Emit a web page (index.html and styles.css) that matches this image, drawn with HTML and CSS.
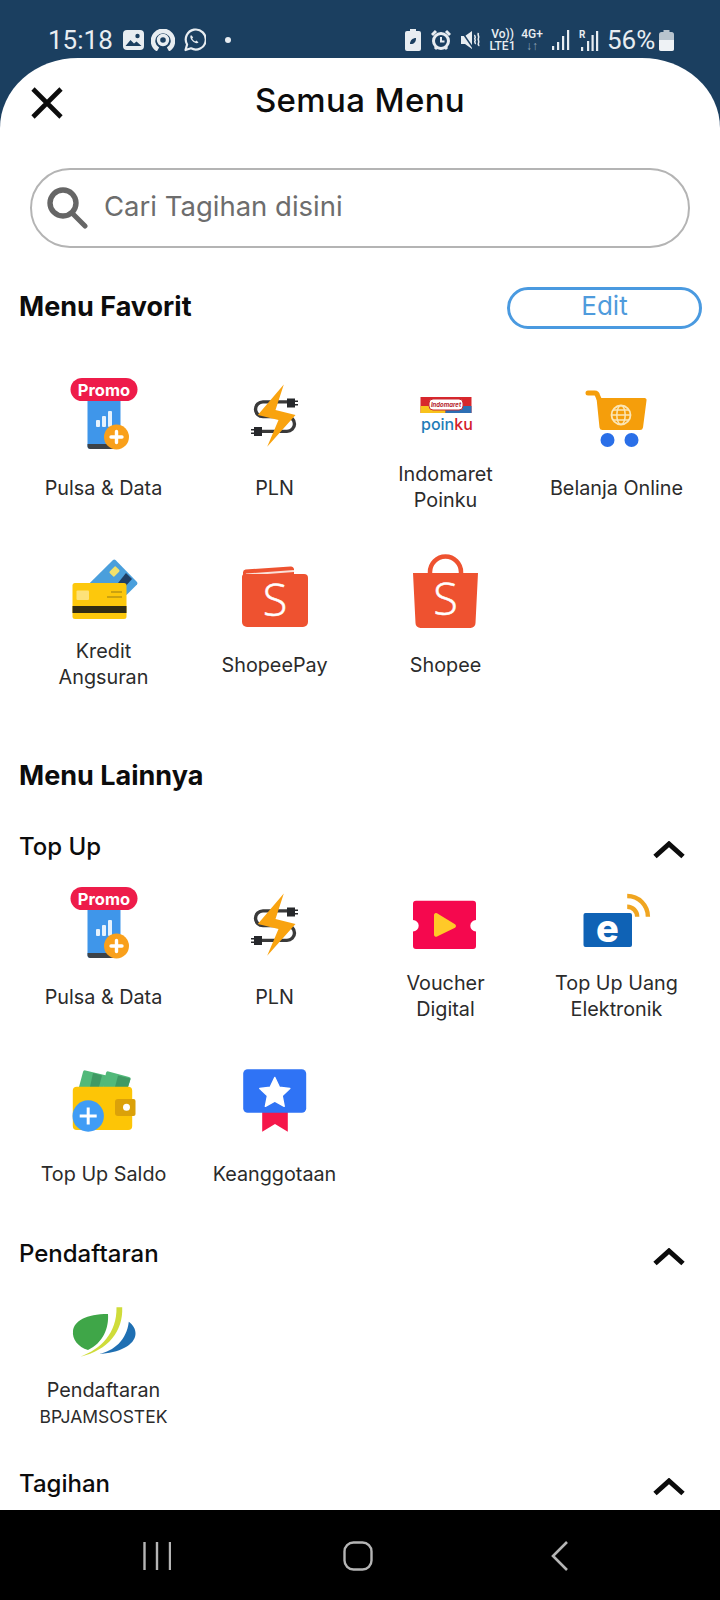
FILE: index.html
```html
<!DOCTYPE html>
<html>

<head>
    <title>Semua Menu</title>
    <link rel="stylesheet" href="styles.css">
</head>

<body>
    <div class="status-bar">
        <div class="status-side">
            <span class="clock">15:18</span>
            <svg class="st-icon" width="21" height="20" viewBox="0 0 21 20"><rect width="21" height="20" rx="4" fill="#e8edf1"/><circle cx="14.500" cy="6" r="2.200" fill="#1b3f60"/><path d="M2.500 16l5-6 3.500 3.500 2.500-2 5 4.500z" fill="#1b3f60"/></svg>
            <svg class="st-icon st-ring" width="24" height="22" viewBox="0 0 24 22"><path d="M7 20.500a10 10 0 1 1 10 0" fill="none" stroke="#e8edf1" stroke-width="4.600"/><circle cx="12" cy="11" r="4.500" fill="none" stroke="#e8edf1" stroke-width="3.400"/></svg>
            <svg class="st-icon" width="23" height="24" viewBox="0 0 23 24"><path d="M2.500 22l1.600-5.500A10 10 0 1 1 8 20.300z" fill="none" stroke="#e8edf1" stroke-width="2.200" stroke-linejoin="round"/><path d="M8 7c-1.500 1.500-.5 4 1.500 6s4.500 3 6 1.500l-2-2-1.300 1c-1.200-.5-2.500-1.800-3-3l1-1.300z" fill="#e8edf1"/></svg>
            <span class="st-dot"></span>
        </div>
        <div class="status-side">
            <svg class="st-icon st-saver" width="16" height="22" viewBox="0 0 16 22"><rect x="5" width="6" height="3" fill="#e8edf1"/><rect y="2" width="16" height="20" rx="2" fill="#e8edf1"/><path d="M5 15c0-4 3-6 6-6 0 4-2 6-5 6" fill="#1b3f60"/></svg>
            <svg class="st-icon st-alarm" width="20" height="22" viewBox="0 0 20 22"><circle cx="10" cy="12" r="7.500" fill="none" stroke="#e8edf1" stroke-width="3"/><path d="M10 8v4.500h3.500" fill="none" stroke="#e8edf1" stroke-width="2"/><path d="M1 6l4-4M19 6l-4-4M4 20l2-2M16 20l-2-2" stroke="#e8edf1" stroke-width="3"/></svg>
            <svg class="st-icon st-mute" width="19" height="20" viewBox="0 0 19 20"><path d="M0 6h4l7-5v18l-7-5H0z" fill="#e8edf1"/><path d="M1 2l11 16" stroke="#1b3f60" stroke-width="1.500"/><path d="M14 5c-1 1 1 2 0 3s1 2 0 3 1 2 0 3M17.500 3c-1.500 2 1 3 0 5s1 3 0 5 1 2 0 3" fill="none" stroke="#e8edf1" stroke-width="1.600"/></svg>
            <span class="st-stack st-volte">Vo))<br>LTE1</span>
            <span class="st-stack st-net">4G+<br><i>↓↑</i></span>
            <svg class="st-icon" width="19" height="20" viewBox="0 0 19 20"><path d="M1 16h2.200v4H1zM6 12h2.200v8H6zM11 6h2.200v14H11zM16 0h2.200v20H16z" fill="#e8edf1"/></svg>
            <svg class="st-icon st-roam" width="20" height="22" viewBox="0 0 20 22"><path d="M2 18h2.200v4H2zM8 12h2.200v10H8zM12.500 6h2.200v16h-2.200zM17 2h2.200v20H17z" fill="#e8edf1"/><text x="0" y="9" class="st-r">R</text></svg>
            <span class="battery-text">56%</span>
            <svg class="st-icon" width="15" height="21" viewBox="0 0 15 21"><rect x="4.500" width="6" height="3" fill="#b8c4ce"/><rect y="2" width="15" height="19" rx="2.500" fill="#b8c4ce"/><path d="M0 10h15v8.500a2.500 2.500 0 0 1-2.500 2.500h-10A2.500 2.500 0 0 1 0 18.500z" fill="#eef2f5"/></svg>
        </div>
    </div>

    <div class="sheet">
        <div class="sheet-header">
            <svg class="close-icon" width="32" height="32" viewBox="0 0 32 32"><path d="M2 2l28 28M30 2L2 30" stroke="#0c0c0c" stroke-width="4.600"/></svg>
            <h1>Semua Menu</h1>
        </div>

        <div class="search-box">
            <svg class="search-icon" width="42" height="42" viewBox="0 0 42 42"><circle cx="17" cy="16" r="13" fill="none" stroke="#666" stroke-width="5.400"/><path d="M26 26l13 13" stroke="#666" stroke-width="5" stroke-linecap="round"/></svg>
            <span>Cari Tagihan disini</span>
        </div>

        <div class="fav-head">
            <h2>Menu Favorit</h2>
            <div class="edit-btn">Edit</div>
        </div>

        <div class="menu-grid fav-grid">
            <div class="menu-item">
                <svg class="icon" viewBox="0 0 80 80">
                    <rect x="23.500" y="20" width="33" height="56" rx="3" fill="#3f96ea"/>
                    <path d="M23.500 71h33v2a3 3 0 0 1-3 3h-27a3 3 0 0 1-3-3z" fill="#3c4248"/>
                    <rect x="32" y="47" width="4" height="7" rx="1" fill="#e6f2fd"/>
                    <rect x="38" y="43" width="4" height="11" rx="1" fill="#e6f2fd"/>
                    <rect x="44" y="38" width="4" height="16" rx="1" fill="#e6f2fd"/>
                    <circle cx="52.500" cy="64" r="12.500" fill="#f9a01b"/>
                    <path d="M47 64h11M52.500 58.500v11" stroke="#fff" stroke-width="3.400" stroke-linecap="round"/>
                    <rect x="6.500" y="5" width="67" height="23" rx="11.500" fill="#ee1c4a"/>
                    <text x="40" y="22.500" class="promo-text">Promo</text>
                </svg>
                <div class="label">Pulsa &amp; Data</div>
            </div>
            <div class="menu-item">
                <svg class="icon" viewBox="0 0 80 80">
                    <path d="M60 30H28a7.500 7.500 0 0 0 0 15h24a7.500 7.500 0 0 1 0 15H20" fill="none" stroke="#3a3a3a" stroke-width="3.400" transform="translate(0 -.5) scale(1 .98)"/>
                    <path d="M52 25.500h8v2h3v1.500h-3v2h3v1.500h-3v2h-8zM27 54h-8v2h-3v1.500h3v2h-3v1.500h3v2h8z" fill="#26282b"/>
                    <path d="M48.800 11.500 22.800 42l20.700 5-11.300 26.700L60.500 42l-20-5z" fill="#f9a30f"/>
                </svg>
                <div class="label">PLN</div>
            </div>
            <div class="menu-item">
                <svg class="icon" viewBox="0 0 80 80">
                    <rect x="14.500" y="24" width="51" height="16" fill="#d8262c"/>
                    <rect x="14.500" y="33" width="25" height="7" fill="#f8c21c"/>
                    <rect x="39.500" y="33" width="26" height="7" fill="#2d6fb4"/>
                    <rect x="23" y="26" width="34" height="11" rx="4" fill="#fff" stroke="#c92a32"/>
                    <text x="40" y="34" class="indo-text">Indomaret</text>
                    <text x="15" y="57" class="poin-text">poin<tspan fill="#d4202a">ku</tspan></text>
                </svg>
                <div class="label">Indomaret<br>Poinku</div>
            </div>
            <div class="menu-item">
                <svg class="icon" viewBox="0 0 80 80">
                    <path d="M11 20h6.500a3 3 0 0 1 3 2.500L23 28" fill="none" stroke="#f59e0b" stroke-width="5" stroke-linecap="round"/>
                    <path d="M19.500 25h48a2 2 0 0 1 2 2.500l-3.500 27a3 3 0 0 1-3 2.500H25.500a3 3 0 0 1-3-2.500z" fill="#f59e0b"/>
                    <circle cx="44" cy="42" r="9.500" fill="none" stroke="#fbe6b6" stroke-width="1.800"/>
                    <ellipse cx="44" cy="42" rx="4.200" ry="9.500" fill="none" stroke="#fbe6b6" stroke-width="1.500"/>
                    <path d="M34.500 42h19M36 37h16M36 47h16" stroke="#fbe6b6" stroke-width="1.500"/>
                    <circle cx="30.500" cy="67" r="7" fill="#2a6fe8"/>
                    <circle cx="54.500" cy="67" r="7" fill="#2a6fe8"/>
                </svg>
                <div class="label">Belanja Online</div>
            </div>
            <div class="menu-item">
                <svg class="icon" viewBox="0 0 80 80">
                    <path d="M49 10a2 2 0 0 1 2.500 0l21.500 22a2 2 0 0 1 0 2.500L62.500 45 24.800 34z" fill="#4a9fdc"/>
                    <path d="M62 23l6 6-8 9-6-5z" fill="#1f3f66"/>
                    <rect x="46" y="18" width="9" height="7" rx="1.500" transform="rotate(-45 50.500 21.500)" fill="#f2e16b"/>
                    <rect x="8.500" y="33" width="54" height="36" rx="2.500" fill="#fdc80c"/>
                    <rect x="8.500" y="56" width="54" height="7" fill="#322c12"/>
                    <rect x="12.500" y="40.500" width="12.500" height="9.500" rx="1" fill="#fde27a"/>
                    <path d="M43 47h15M47 42h11" stroke="#9a7c12" stroke-width="1.200"/>
                </svg>
                <div class="label">Kredit<br>Angsuran</div>
            </div>
            <div class="menu-item">
                <svg class="icon" viewBox="0 0 80 80">
                    <path d="M8 26.500v-4a3 3 0 0 1 2.500-3l45-3a3 3 0 0 1 3.500 3V25z" fill="#ee5230"/>
                    <path d="M11 24.500l48-3.500" stroke="#fbe1d8" stroke-width="2"/>
                    <path d="M7 27a3 3 0 0 1 3-3h59a4 4 0 0 1 4 4v44a5 5 0 0 1-5 5H12a5 5 0 0 1-5-5z" fill="#ee5230"/>
                    <text x="40" y="66" class="logo-s">S</text>
                </svg>
                <div class="label">ShopeePay</div>
            </div>
            <div class="menu-item">
                <svg class="icon" viewBox="0 0 80 80">
                    <path d="M24 25v-3a15.500 15.500 0 0 1 31 0v3" fill="none" stroke="#ee5230" stroke-width="4.500"/>
                    <path d="M7 23h65l-2.500 50a5 5 0 0 1-5 5h-50a5 5 0 0 1-5-5z" fill="#ee5230"/>
                    <text x="39.500" y="65" class="logo-s">S</text>
                </svg>
                <div class="label">Shopee</div>
            </div>
        </div>

        <h2 class="other-title">Menu Lainnya</h2>

        <div class="group-head">
            <h3>Top Up</h3>
            <svg class="chevron" width="32" height="18" viewBox="0 0 32 18"><path d="M2 15.500L16 3l14 12.500" fill="none" stroke="#0c0c0c" stroke-width="5"/></svg>
        </div>
        <div class="menu-grid">
            <div class="menu-item">
                <svg class="icon" viewBox="0 0 80 80">
                    <rect x="23.500" y="20" width="33" height="56" rx="3" fill="#3f96ea"/>
                    <path d="M23.500 71h33v2a3 3 0 0 1-3 3h-27a3 3 0 0 1-3-3z" fill="#3c4248"/>
                    <rect x="32" y="47" width="4" height="7" rx="1" fill="#e6f2fd"/>
                    <rect x="38" y="43" width="4" height="11" rx="1" fill="#e6f2fd"/>
                    <rect x="44" y="38" width="4" height="16" rx="1" fill="#e6f2fd"/>
                    <circle cx="52.500" cy="64" r="12.500" fill="#f9a01b"/>
                    <path d="M47 64h11M52.500 58.500v11" stroke="#fff" stroke-width="3.400" stroke-linecap="round"/>
                    <rect x="6.500" y="5" width="67" height="23" rx="11.500" fill="#ee1c4a"/>
                    <text x="40" y="22.500" class="promo-text">Promo</text>
                </svg>
                <div class="label">Pulsa &amp; Data</div>
            </div>
            <div class="menu-item">
                <svg class="icon" viewBox="0 0 80 80">
                    <path d="M60 30H28a7.500 7.500 0 0 0 0 15h24a7.500 7.500 0 0 1 0 15H20" fill="none" stroke="#3a3a3a" stroke-width="3.400" transform="translate(0 -.5) scale(1 .98)"/>
                    <path d="M52 25.500h8v2h3v1.500h-3v2h3v1.500h-3v2h-8zM27 54h-8v2h-3v1.500h3v2h-3v1.500h3v2h8z" fill="#26282b"/>
                    <path d="M48.800 11.500 22.800 42l20.700 5-11.300 26.700L60.500 42l-20-5z" fill="#f9a30f"/>
                </svg>
                <div class="label">PLN</div>
            </div>
            <div class="menu-item">
                <svg class="icon" viewBox="0 0 80 80">
                    <path d="M10 18.700h57a3 3 0 0 1 3 3V38a5.700 5.700 0 0 0 0 11.400V64a3 3 0 0 1-3 3H10a3 3 0 0 1-3-3V49.400A5.700 5.700 0 0 0 7 38V21.700a3 3 0 0 1 3-3z" fill="#f5084e"/>
                    <path d="M28 33a2 2 0 0 1 3-1.700l18 11a2 2 0 0 1 0 3.400l-18 8.800a2 2 0 0 1-3-1.700z" fill="#ffc928"/>
                </svg>
                <div class="label">Voucher<br>Digital</div>
            </div>
            <div class="menu-item">
                <svg class="icon" viewBox="0 0 80 80">
                    <rect x="6.500" y="31" width="48.500" height="34" rx="2" fill="#0f62b5"/>
                    <text x="30.500" y="60" class="emoney-e">e</text>
                    <path d="M50.200 24.700a10 10 0 0 1 10 10M50.200 14a20.700 20.700 0 0 1 20.700 20.700" fill="none" stroke="#f0a520" stroke-width="4.400"/>
                </svg>
                <div class="label">Top Up Uang<br>Elektronik</div>
            </div>
            <div class="menu-item">
                <svg class="icon" viewBox="0 0 80 80">
                    <path d="M15 28l4-15a2 2 0 0 1 2.500-1.500l21 5-3 11.500z" fill="#52b97a"/>
                    <path d="M29 14l9 2.500-3 11.500h-9z" fill="#3f9a64"/>
                    <path d="M39 28l3-14a2 2 0 0 1 2.500-1.500L65 18a2 2 0 0 1 1.500 2.500L64 28z" fill="#52b97a"/>
                    <path d="M54 16.500l12.500 3L64 28H51z" fill="#3f9a64"/>
                    <rect x="8.800" y="27.700" width="59.400" height="43.300" rx="4" fill="#fdc506"/>
                    <path d="M54 40h15.500a2 2 0 0 1 2 2v13a2 2 0 0 1-2 2H54a3 3 0 0 1-3-3V43a3 3 0 0 1 3-3z" fill="#dba109"/>
                    <circle cx="62.500" cy="48.300" r="3.500" fill="#fff"/>
                    <circle cx="24.200" cy="57" r="15.700" fill="#3f9cf5"/>
                    <path d="M15.700 57h17M24.200 48.500v17" stroke="#fff" stroke-width="3"/>
                </svg>
                <div class="label">Top Up Saldo</div>
            </div>
            <div class="menu-item">
                <svg class="icon" viewBox="0 0 80 80">
                    <path d="M27.200 50h25.600v22.700L40 65l-12.800 7.700z" fill="#f5174a"/>
                    <rect x="8.200" y="10.300" width="63" height="43.400" rx="4.500" fill="#2f73f5"/>
                    <path d="M39.800 18.500l4.600 9.700 10.400 1.300-7.700 7.200 2.100 10.600-9.400-5.300-9.400 5.300 2.100-10.600-7.700-7.200 10.400-1.300z" fill="#fff" stroke="#fff" stroke-width="1.500" stroke-linejoin="round"/>
                </svg>
                <div class="label">Keanggotaan</div>
            </div>
        </div>

        <div class="group-head">
            <h3>Pendaftaran</h3>
            <svg class="chevron" width="32" height="18" viewBox="0 0 32 18"><path d="M2 15.500L16 3l14 12.500" fill="none" stroke="#0c0c0c" stroke-width="5"/></svg>
        </div>
        <div class="menu-grid">
            <div class="menu-item">
                <svg class="icon" viewBox="0 0 80 80">
                    <path d="M44 25c1 14-5 29-20 36C14 58 8 50 9 42c1-10 13-17 35-17z" fill="#3fa648"/>
                    <path d="M52.500 18.300h5.700c1 24-14 43-41.700 49.400C37 60 53 44 52.500 18.300z" fill="#cfdc3a"/>
                    <path d="M64.800 32.700C69 36 71.800 40 71.500 45 71 56 55 64 34.800 65c15-3 28-14 30-32.300z" fill="#1f6fb2"/>
                </svg>
                <div class="label">Pendaftaran<br><span class="label-caps">BPJAMSOSTEK</span></div>
            </div>
        </div>

        <div class="group-head">
            <h3>Tagihan</h3>
            <svg class="chevron" width="32" height="18" viewBox="0 0 32 18"><path d="M2 15.500L16 3l14 12.500" fill="none" stroke="#0c0c0c" stroke-width="5"/></svg>
        </div>
    </div>

    <div class="nav-bar">
        <svg width="28" height="30" viewBox="0 0 28 30"><path d="M1.500 1v28M14 1v28M27 1v28" stroke="#b5b5b5" stroke-width="2.400"/></svg>
        <svg width="30" height="30" viewBox="0 0 30 30"><rect x="1.500" y="1.500" width="27" height="27" rx="9" fill="none" stroke="#b5b5b5" stroke-width="2.400"/></svg>
        <svg width="18" height="30" viewBox="0 0 18 30"><path d="M16 1L2 15l14 14" fill="none" stroke="#b5b5b5" stroke-width="2.600"/></svg>
    </div>
</body>

</html>
```
FILE: styles.css
```css
body {
    margin: 0;
    width: 720px;
    height: 1600px;
    overflow: hidden;
    background-color: #1b3f60;
    font-family: Inter, "Open Sans", sans-serif;
}

h1, h2, h3 {
    margin: 0;
}

/* status bar */
.status-bar {
    height: 58px;
    box-sizing: border-box;
    padding: 26px 46px 0 48px;
    display: flex;
    justify-content: space-between;
    align-items: flex-start;
    color: #e8edf1;
    font-family: Roboto, sans-serif;
}

.status-side {
    display: flex;
    align-items: center;
    height: 28px;
}

.clock {
    font-size: 26px;
    width: 75px;
}

.status-side .st-icon {
    margin-right: 9px;
}

.status-side .st-ring {
    margin-left: -2px;
    margin-right: 8px;
}

.status-side .st-saver {
    margin-right: 8px;
}

.status-side .st-alarm {
    margin-left: 2px;
    margin-right: 7px;
}

.status-side .st-mute {
    margin-left: 3px;
}

.status-side .st-roam {
    margin-right: 6px;
}

.st-dot {
    width: 6px;
    height: 6px;
    border-radius: 50%;
    background-color: #e8edf1;
    margin-left: 10px;
}

.st-stack {
    font-size: 12px;
    line-height: 12px;
    font-weight: 500;
    text-align: center;
}

.st-volte {
    width: 27px;
    margin-right: 5px;
}

.st-net {
    width: 22px;
    margin-right: 8px;
}

.st-net i {
    font-style: normal;
    color: #8fa3b5;
}

.st-r {
    font-size: 10px;
    font-weight: 700;
    fill: #e8edf1;
}

.battery-text {
    font-size: 26px;
    width: 52px;
    margin-left: 2px;
}

.status-side .st-icon:last-child {
    margin-right: 0;
}

/* sheet */
.sheet {
    height: 1452px;
    box-sizing: border-box;
    overflow: hidden;
    background-color: #fff;
    border-radius: 78px 78px 0 0 / 70px 70px 0 0;
}

.sheet-header {
    height: 84px;
    padding-left: 31px;
    display: grid;
    grid-template-columns: 32px 1fr 63px;
    align-items: center;
}

.sheet-header h1 {
    font-size: 33px;
    font-weight: 500;
    text-align: center;
    color: #0c0c0c;
    letter-spacing: 0.35px;
}

.close-icon {
    margin-top: 6px;
}

.search-box {
    height: 80px;
    box-sizing: border-box;
    margin: 26px 30px 0 30px;
    padding-left: 14px;
    border: 2px solid #b4b4b4;
    border-radius: 40px;
    display: flex;
    align-items: center;
    color: #6d6d6d;
    font-size: 27.5px;
}

.search-box span {
    margin-left: 16px;
    padding-bottom: 4px;
}

.fav-head {
    height: 42px;
    margin-top: 39px;
    padding: 0 18px 0 19px;
    display: flex;
    justify-content: space-between;
    align-items: center;
}

.fav-head h2 {
    padding-bottom: 3px;
}

h2 {
    font-size: 27px;
    font-weight: 700;
    color: #0c0c0c;
}

.edit-btn {
    width: 195px;
    height: 42px;
    box-sizing: border-box;
    border: 3px solid #4a9ae0;
    border-radius: 21px;
    color: #4f9bdc;
    font-size: 26px;
    line-height: 32px;
    text-align: center;
}

.other-title {
    height: 30px;
    line-height: 30px;
    margin-top: 71px;
    padding-left: 19px;
    font-size: 27px;
}

.group-head {
    height: 30px;
    margin-top: 39px;
    padding: 0 35px 0 19px;
    display: flex;
    justify-content: space-between;
    align-items: center;
}

.group-head h3 {
    font-size: 24px;
    font-weight: 500;
    color: #0c0c0c;
    padding-top: 1px;
}

.chevron {
    margin-top: 7px;
}

.other-title + .group-head {
    margin-top: 40px;
}

/* menu grid */
.menu-grid {
    margin-top: 21px;
    padding-left: 18px;
    display: grid;
    grid-template-columns: repeat(4, 171px);
    grid-auto-rows: 140px;
    row-gap: 37px;
}

.fav-grid {
    margin-top: 44px;
}

.menu-item {
    display: flex;
    flex-direction: column;
    align-items: center;
}

.icon {
    width: 80px;
    height: 80px;
    flex: none;
}

.label {
    height: 52px;
    box-sizing: border-box;
    padding-top: 2px;
    margin-top: 8px;
    display: flex;
    align-items: center;
    justify-content: center;
    text-align: center;
    font-size: 19.8px;
    line-height: 26px;
    color: #2b2b2b;
    white-space: nowrap;
}

.label:has(br) {
    display: block;
    padding-top: 0;
}

.label-caps {
    font-size: 17.5px;
}

/* text inside icons */
.promo-text {
    font-size: 16.5px;
    font-weight: 700;
    fill: #fff;
    text-anchor: middle;
}

.indo-text {
    font-size: 6px;
    font-weight: 700;
    font-style: italic;
    fill: #b5232b;
    text-anchor: middle;
}

.poin-text {
    font-size: 16px;
    font-weight: 500;
    fill: #1f7cb8;
}

.logo-s {
    font-size: 45px;
    font-weight: 300;
    fill: #fff;
    stroke: #fff;
    stroke-width: 0.5px;
    text-anchor: middle;
    font-family: "Open Sans", sans-serif;
}

.emoney-e {
    font-size: 38px;
    font-weight: 800;
    fill: #fff;
    text-anchor: middle;
}

/* nav bar */
.nav-bar {
    height: 90px;
    box-sizing: border-box;
    padding: 31px 4px 0 0;
    background-color: #000;
    display: grid;
    grid-template-columns: repeat(3, 201.5px);
    justify-content: center;
    justify-items: center;
    align-items: start;
}
```
